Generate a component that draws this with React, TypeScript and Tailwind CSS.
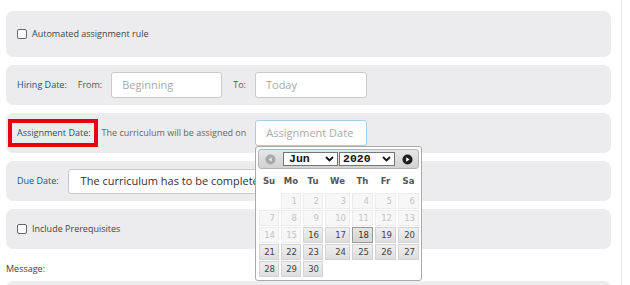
import React from 'react';
import clsx from 'clsx';

type Day = { n?: number; kind: 'empty' | 'off' | 'on' | 'today' };

const off = (n: number): Day => ({ n, kind: 'off' });
const on = (n: number): Day => ({ n, kind: 'on' });

const weeks: Day[][] = [
  [{ kind: 'empty' }, off(1), off(2), off(3), off(4), off(5), off(6)],
  [off(7), off(8), off(9), off(10), off(11), off(12), off(13)],
  [off(14), off(15), on(16), on(17), { n: 18, kind: 'today' }, on(19), on(20)],
  [on(21), on(22), on(23), on(24), on(25), on(26), on(27)],
  [on(28), on(29), on(30)],
];

const dayNames = ['Su', 'Mo', 'Tu', 'We', 'Th', 'Fr', 'Sa'];

function Checkbox() {
  return <span className="block h-[10px] w-[10px] shrink-0 rounded-[2px] border border-[#666] bg-white" />;
}

function Chevron() {
  return (
    <svg width="9" height="6" viewBox="0 0 9 6" className="shrink-0">
      <path d="M1 1 L4.5 4.5 L8 1" fill="none" stroke="#111" strokeWidth="1.8" />
    </svg>
  );
}

function DatePicker() {
  return (
    <div className="absolute left-[255px] top-[146px] h-[135px] w-[167px] rounded-[3px] border border-[#aaa] bg-white p-[2px] font-['DejaVu_Sans',sans-serif]">
      {/* header */}
      <div className="flex h-[20px] items-center rounded-[3px] border border-[#b5b5b5] bg-gradient-to-b from-[#e6e6e6] to-[#d2d2d2]">
        <svg width="11" height="11" viewBox="0 0 11 11" className="ml-[6px] shrink-0">
          <circle cx="5.5" cy="5.5" r="5" fill="#a8a8a8" />
          <path d="M3.5 5.5 L6.8 3.3 L6.8 7.7 Z" fill="#e6e6e6" />
        </svg>
        <div className="ml-[7px] flex h-[14px] w-[55px] items-center justify-between border border-[#767676] bg-white pl-[5px] pr-[3px] font-['Liberation_Mono',monospace] text-[11.5px] font-bold leading-none text-[#111]">
          <span>Jun</span>
          <Chevron />
        </div>
        <div className="ml-[1px] flex h-[14px] w-[56px] items-center justify-between border border-[#767676] bg-white pl-[3px] pr-[3px] font-['Liberation_Mono',monospace] text-[11.5px] font-bold leading-none text-[#111]">
          <span>2020</span>
          <Chevron />
        </div>
        <svg width="11" height="11" viewBox="0 0 11 11" className="ml-auto mr-[5px] shrink-0">
          <circle cx="5.5" cy="5.5" r="5" fill="#1e1e1e" />
          <path d="M7.5 5.5 L4.2 3.3 L4.2 7.7 Z" fill="#fff" />
        </svg>
      </div>

      {/* day names */}
      <div className="ml-[1px] grid h-[24px] grid-cols-[20px_20px_20px_25px_21px_21px_21px] items-center gap-x-[2px] text-[8.5px] font-bold leading-none text-[#555]">
        {dayNames.map((d) => (
          <span key={d} className="text-center">{d}</span>
        ))}
      </div>

      {/* days */}
      <div className="ml-[1px] grid grid-cols-[20px_20px_20px_25px_21px_21px_21px] gap-x-[2px] gap-y-[1px] text-[8.5px]">
        {weeks.flat().map((d, i) =>
          d.kind === 'empty' ? (
            <span key={i} />
          ) : (
            <span
              key={i}
              className={clsx(
                'flex h-[16px] items-center justify-end border pr-[3px] leading-none',
                d.kind === 'off' && 'border-[#ececec] bg-[#f7f7f7] text-[#c4c4c4]',
                d.kind === 'on' && 'border-[#d3d3d3] bg-gradient-to-b from-[#efefef] to-[#dedede] text-[#444]',
                d.kind === 'today' && 'border-[#999] bg-gradient-to-b from-[#e4e4e4] to-[#d6d6d6] text-[#333]'
              )}
            >
              {d.n}
            </span>
          )
        )}
      </div>
    </div>
  );
}

export default function App() {
  return (
    <div className="relative flex h-[285px] w-[630px] overflow-hidden bg-white font-['Open_Sans',sans-serif] text-[9px]">
      <div className="w-[622px] shrink-0 border-r border-[#e6e6e6] pl-[6px] pr-[10px] pt-[11px]">
        <div className="flex flex-col gap-2">
          {/* automated rule */}
          <div className="flex h-[46px] items-center gap-[5px] rounded-[7px] bg-[#ececee] px-[11px] text-[#444]">
            <Checkbox />
            <span>Automated assignment rule</span>
          </div>

          {/* hiring date */}
          <div className="flex h-[40px] items-center rounded-[7px] bg-[#ececee] px-[11px]">
            <span className="text-[#1c4f86]">Hiring Date:</span>
            <span className="ml-[11px] text-[#555]">From:</span>
            <div className="ml-[9px] flex h-[26px] w-[111px] items-center rounded-[3px] border border-[#cacaca] bg-white pl-[10px] text-[11px] text-[#aaa]">
              Beginning
            </div>
            <span className="ml-[11px] text-[#555]">To:</span>
            <div className="ml-[9px] flex h-[26px] w-[112px] items-center rounded-[3px] border border-[#cacaca] bg-white pl-[10px] text-[11px] text-[#aaa]">
              Today
            </div>
          </div>

          {/* assignment date */}
          <div className="flex h-[40px] items-center rounded-[7px] bg-[#ececee] px-[11px]">
            <span className="-ml-[9px] flex h-[28px] items-center border-4 border-[#e8000b] pl-[5px] pr-[3px] text-[#1c4f86]">
              Assignment Date:
            </span>
            <span className="ml-[4px] text-[#666]">The curriculum will be assigned on</span>
            <div className="ml-[9px] flex h-[26px] w-[112px] items-center rounded-[3px] border border-[#a9c9ea] bg-white pl-[10px] text-[11px] text-[#aaa]">
              Assignment Date
            </div>
          </div>

          {/* due date */}
          <div className="flex h-[40px] items-center rounded-[7px] bg-[#ececee] px-[11px]">
            <span className="text-[#1c4f86]">Due Date:</span>
            <div className="ml-[9px] flex h-[25px] w-[340px] items-center overflow-hidden whitespace-nowrap rounded-[3px] border border-[#cacaca] bg-white pl-[12px] text-[11px] text-[#333]">
              The curriculum has to be completed within 30 days
            </div>
          </div>

          {/* prerequisites */}
          <div className="flex h-[40px] items-center gap-[5px] rounded-[7px] bg-[#ececee] px-[11px] text-[#444]">
            <Checkbox />
            <span>Include Prerequisites</span>
          </div>
        </div>

        <div className="mt-[14px] h-[12px] leading-[12px] text-[#444]">Message:</div>
        <div className="mt-[6px] h-[40px] rounded-[7px] bg-[#ececee]" />
      </div>

      <DatePicker />
    </div>
  );
}
